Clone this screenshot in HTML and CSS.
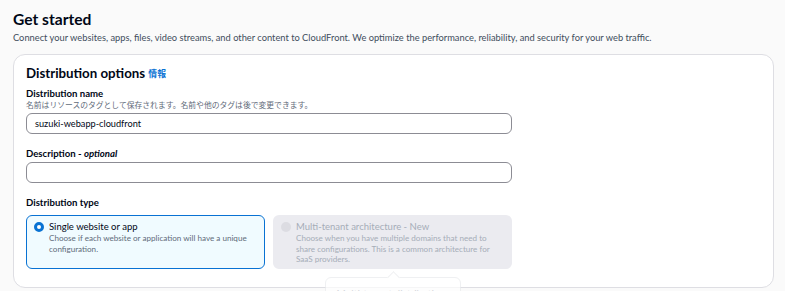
FILE: index.html
```html
<!DOCTYPE html>
<html lang="ja">
<head>
<meta charset="utf-8">
<link rel="stylesheet" href="styles.css">
</head>
<body>
<main class="page">
  <h1 class="title">Get started</h1>
  <p class="subtitle">Connect your websites, apps, files, video streams, and other content to CloudFront. We optimize the performance, reliability, and security for your web traffic.</p>
  <section class="card">
    <h2 class="card-title">Distribution options <a class="info" href="#">情報</a></h2>
    <div class="field">
      <div class="label">Distribution name</div>
      <div class="hint">名前はリソースのタグとして保存されます。名前や他のタグは後で変更できます。</div>
      <div class="input">suzuki-webapp-cloudfront</div>
    </div>
    <div class="field">
      <div class="label">Description - <i>optional</i></div>
      <div class="input"></div>
    </div>
    <div class="field">
      <div class="label">Distribution type</div>
      <div class="tiles">
        <div class="tile selected">
          <span class="radio on"></span>
          <div class="tile-body">
            <div class="tile-title">Single website or app</div>
            <div class="tile-desc">Choose if each website or application will have a unique configuration.</div>
          </div>
        </div>
        <div class="tile disabled">
          <span class="radio off"></span>
          <div class="tile-body">
            <div class="tile-title">Multi-tenant architecture - New</div>
            <div class="tile-desc">Choose when you have multiple domains that need to share configurations. This is a common architecture for SaaS providers.</div>
          </div>
          <div class="tooltip">Multi-tenant distributions</div>
        </div>
      </div>
    </div>
  </section>
</main>
</body>
</html>
```
FILE: styles.css
```css
html, body {
  margin: 0;
  padding: 0;
  background: #fafafa;
  font-family: "Lato", "Noto Sans CJK JP", sans-serif;
  color: #000716;
  overflow: hidden;
  height: 291px;
}
.page {
  padding: 8px 11px 0 13px;
}
.title {
  margin: 0;
  font-size: 15.6px;
  line-height: 22px;
  font-weight: 700;
}
.subtitle {
  margin: 1px 0 0;
  font-size: 9.3px;
  line-height: 14px;
  color: #414d5c;
}
.card {
  margin-top: 9px;
  background: #fff;
  border: 1px solid #dedee3;
  border-radius: 12px;
  padding: 9px 12px 0 12px;
  height: 223px;
  box-sizing: content-box;
}
.card-title {
  margin: 0;
  font-size: 13.3px;
  line-height: 18px;
  font-weight: 700;
}
.info {
  font-size: 8.8px;
  color: #0972d3;
  text-decoration: none;
  font-weight: 700;
  vertical-align: 1px;
}
.field {
  margin-top: 4px;
  width: 486px;
}
.field + .field {
  margin-top: 13px;
}
.label {
  font-size: 9.6px;
  line-height: 13px;
  font-weight: 700;
}
.hint {
  font-size: 7.8px;
  line-height: 11px;
  color: #5f6b7a;
}
.input {
  margin-top: 2px;
  height: 19px;
  border: 1px solid #8c8c94;
  border-radius: 6px;
  font-size: 9.2px;
  line-height: 19px;
  padding: 0 8px;
  color: #000716;
}
.tiles {
  margin-top: 6px;
  display: grid;
  grid-template-columns: 1fr 1fr;
  gap: 8px;
}
.tile {
  position: relative;
  display: flex;
  gap: 5px;
  border-radius: 6px;
  padding: 5px 10px 5px 8px;
  height: 54px;
  box-sizing: border-box;
}
.tile.selected {
  background: #f0fbff;
  border: 1.5px solid #0972d3;
  padding: 4px 10px 4px 7px;
}
.tile.disabled {
  background: #ebebf0;
}
.radio {
  flex: none;
  width: 10px;
  height: 10px;
  border-radius: 50%;
  margin-top: 2px;
  box-sizing: border-box;
}
.radio.on {
  border: 3px solid #0972d3;
  background: #fff;
}
.radio.off {
  background: #dcdce2;
}
.tile-title {
  font-size: 9.5px;
  line-height: 13px;
}
.tile-desc {
  font-size: 8.1px;
  line-height: 10.5px;
  color: #5f6b7a;
}
.disabled .tile-title, .disabled .tile-desc {
  color: #a6adb8;
}
.tooltip {
  position: absolute;
  left: 52px;
  top: 62px;
  width: 136px;
  height: 24px;
  box-sizing: border-box;
  background: #fff;
  border: 1px solid #e9ebed;
  border-radius: 6px;
  font-size: 10px;
  line-height: 12px;
  color: #c4c8ce;
  text-align: center;
  padding-top: 9px;
  opacity: 0.7;
  white-space: nowrap;
}
.tooltip::before {
  content: "";
  position: absolute;
  left: 63px;
  top: -5px;
  width: 8px;
  height: 8px;
  background: #fff;
  border-left: 1px solid #e9ebed;
  border-top: 1px solid #e9ebed;
  transform: rotate(45deg);
}
```
